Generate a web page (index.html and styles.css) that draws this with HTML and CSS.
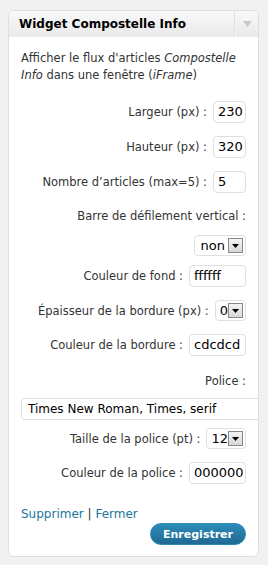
FILE: index.html
```html
<!DOCTYPE html>
<html lang="fr">
<head>
    <meta charset="UTF-8">
    <meta name="viewport" content="width=device-width, initial-scale=1.0">
    <title>Widget Compostelle Info</title>
    <link rel="stylesheet" href="styles.css">
</head>
<body>
    <div class="widget">
        <div class="widget-top">
            <h4 class="widget-title">Widget Compostelle Info</h4>
            <div class="widget-toggle">
                <svg width="9" height="6" viewBox="0 0 9 6"><path d="M0 0H9L4.5 6Z" fill="#c8c8c8"/></svg>
            </div>
        </div>
        <div class="widget-inside">
            <p class="widget-desc">Afficher le flux d'articles <em>Compostelle Info</em> dans une fenêtre (<em>iFrame</em>)</p>

            <div class="field field-first">
                <label>Largeur (px) :</label>
                <span class="input input-small">230</span>
            </div>
            <div class="field">
                <label>Hauteur (px) :</label>
                <span class="input input-small">320</span>
            </div>
            <div class="field">
                <label>Nombre d’articles (max=5) :</label>
                <span class="input input-small">5</span>
            </div>
            <div class="field field-label">
                <label>Barre de défilement vertical :</label>
            </div>
            <div class="field field-after-label">
                <span class="select">non<span class="select-arrow"><svg width="7" height="4" viewBox="0 0 7 4"><path d="M0 0H7L3.5 4Z" fill="#000"/></svg></span></span>
            </div>
            <div class="field field-close">
                <label>Couleur de fond :</label>
                <span class="input input-color">ffffff</span>
            </div>
            <div class="field">
                <label>Épaisseur de la bordure (px) :</label>
                <span class="select select-num">0<span class="select-arrow"><svg width="7" height="4" viewBox="0 0 7 4"><path d="M0 0H7L3.5 4Z" fill="#000"/></svg></span></span>
            </div>
            <div class="field">
                <label>Couleur de la bordure :</label>
                <span class="input input-color">cdcdcd</span>
            </div>
            <div class="field field-label field-label-far">
                <label>Police :</label>
            </div>
            <div class="field field-wide">
                <span class="input input-wide">Times New Roman, Times, serif</span>
            </div>
            <div class="field field-closer">
                <label>Taille de la police (pt) :</label>
                <span class="select select-num">12<span class="select-arrow"><svg width="7" height="4" viewBox="0 0 7 4"><path d="M0 0H7L3.5 4Z" fill="#000"/></svg></span></span>
            </div>
            <div class="field">
                <label>Couleur de la police :</label>
                <span class="input input-color">000000</span>
            </div>

            <div class="widget-control">
                <div class="widget-links"><a href="#">Supprimer</a> | <a href="#">Fermer</a></div>
                <div class="widget-actions">
                    <button type="button" class="button-primary">Enregistrer</button>
                </div>
            </div>
        </div>
    </div>
</body>
</html>
```

FILE: styles.css
```css
body {
    margin: 0;
    padding: 10px 9px 8px 8px;
    background-color: #f1f1f1;
    font-family: "DejaVu Sans", Verdana, sans-serif;
    font-size: 11.5px;
    color: #333;
}
.widget {
    background-color: #fff;
    border: 1px solid #dfdfdf;
    border-radius: 6px;
    overflow: hidden;
}
.widget-top {
    display: flex;
    align-items: center;
    height: 26px;
    background: linear-gradient(to bottom, #f9f9f9, #e9e9e9);
}
.widget-title {
    flex-grow: 1;
    margin: 0;
    padding-left: 10px;
    font-size: 12px;
    font-weight: bold;
    color: #000;
}
.widget-toggle {
    width: 22px;
    height: 26px;
    display: flex;
    align-items: center;
    justify-content: center;
    border-left: 1px solid #f6f6f6;
    box-shadow: -1px 0 0 #e0e0e0;
}
.widget-inside {
    padding: 13px 12px 11px 12px;
}
.widget-desc {
    margin: 0 -4px 17px 0;
    font-size: 11.5px;
    line-height: 17px;
}
.field {
    display: flex;
    justify-content: flex-end;
    align-items: center;
    gap: 6px;
    min-height: 21px;
    margin-top: 13px;
}
.field-first {
    margin-top: 0;
}
.field-label {
    margin-top: 14px;
    min-height: 17px;
}
.field-label-far {
    margin-top: 16px;
}
.field-after-label {
    margin-top: 11px;
}
.field-close {
    margin-top: 9px;
}
.field-closer {
    margin-top: 8px;
}
.field-wide {
    justify-content: flex-start;
    margin-top: 9px;
    margin-right: -16px;
}
.input {
    box-sizing: border-box;
    height: 22px;
    padding: 0 4px;
    border: 1px solid #dfdfdf;
    border-radius: 4px;
    background-color: #fff;
    font-size: 13px;
    line-height: 20px;
    color: #000;
}
.input-small {
    width: 33px;
}
.input-color {
    width: 57px;
}
.input-wide {
    flex-grow: 1;
    padding-left: 6px;
    font-size: 12px;
}
.select {
    box-sizing: border-box;
    display: flex;
    align-items: center;
    height: 21px;
    padding: 0 2px 0 6px;
    border: 1px solid #dfdfdf;
    border-radius: 4px;
    font-size: 13px;
    color: #000;
    gap: 3px;
}
.select-num {
    padding-left: 4px;
    gap: 0;
}
.select-arrow {
    box-sizing: border-box;
    width: 15px;
    height: 15px;
    display: flex;
    align-items: center;
    justify-content: center;
    border: 1px solid #888;
    background: linear-gradient(to bottom, #f4f4f4, #d8d8d8);
}
.widget-control {
    margin-top: 22px;
}
.widget-links {
    font-size: 12px;
    line-height: 17px;
    color: #333;
}
.widget-links a {
    color: #21759b;
    text-decoration: none;
}
.widget-actions {
    display: flex;
    justify-content: flex-end;
}
.button-primary {
    height: 22px;
    padding: 0 12px;
    border: 1px solid #298cba;
    border-radius: 11px;
    background: linear-gradient(to bottom, #2e8ab8, #1f6a92);
    color: #fff;
    font-family: "DejaVu Sans", Verdana, sans-serif;
    font-size: 11px;
    font-weight: bold;
    cursor: pointer;
}
```
